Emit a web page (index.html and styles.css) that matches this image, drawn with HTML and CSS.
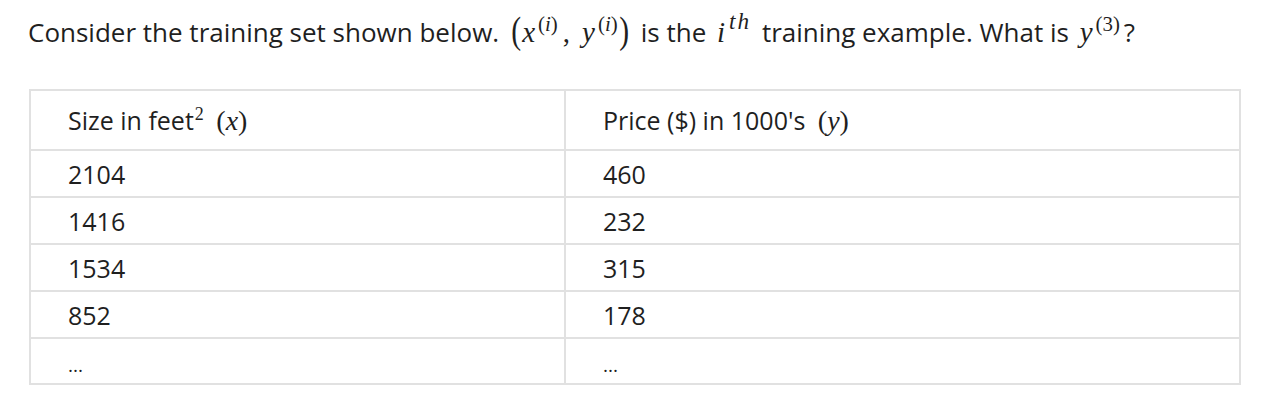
FILE: index.html
```html
<!DOCTYPE html>
<html>
<head>
<meta charset="utf-8">
<link rel="stylesheet" href="styles.css">
</head>
<body>
<p class="question">Consider the training set shown below. <span class="math"><span class="big">(</span><i>x</i><sup>(<i>i</i>)</sup><span class="comma">,</span><i>y</i><sup>(<i>i</i>)</sup><span class="big">)</span></span> is the <span class="math"><i>i</i><sup class="th"><i>th</i></sup></span> training example. What is <span class="math"><i>y</i><sup>(3)</sup></span>?</p>
<table class="data">
  <colgroup><col class="c1"><col class="c2"></colgroup>
  <tr class="head"><td>Size in feet<sup class="num">2</sup> <span class="math">(<i>x</i>)</span></td><td>Price ($) in 1000's <span class="math">(<i>y</i>)</span></td></tr>
  <tr><td>2104</td><td>460</td></tr>
  <tr><td>1416</td><td>232</td></tr>
  <tr><td>1534</td><td>315</td></tr>
  <tr><td>852</td><td>178</td></tr>
  <tr><td class="dots">...</td><td class="dots">...</td></tr>
</table>
</body>
</html>
```
FILE: styles.css
```css
html, body { margin: 0; padding: 0; background: #fff; }
body {
  font-family: "Open Sans", "Noto Sans", sans-serif;
  color: #1f1f1f;
  padding: 0 38px 0 28px;
}
.question {
  margin: 0;
  padding-top: 13px;
  font-size: 26px;
  line-height: 38px;
  white-space: nowrap;
}
.math {
  font-family: "Liberation Serif", "DejaVu Serif", serif;
  font-size: 29px;
  margin: 0 4px;
}
.math i { font-style: italic; }
.math i + sup { margin-left: 3px; }
.big {
  display: inline-block;
  font-size: 37px;
  line-height: 0;
  vertical-align: -1px;
  transform: scaleX(0.8);
}
.comma { margin: 0 12px 0 5px; }
sup { font-size: 0.72em; line-height: 0; vertical-align: 0.55em; }
.math sup.th { font-size: 0.8em; letter-spacing: 2px; margin-left: 4px; }
sup.num { font-family: "Liberation Serif", serif; font-size: 0.72em; margin-left: 1px; }
.data {
  margin-top: 38px;
  margin-left: 1px;
  width: 1212px;
  border-collapse: collapse;
  font-size: 25px;
}
.c1 { width: 535px; }
.data td {
  border: 2px solid #e1e1e1;
  padding: 0 0 0 37px;
  height: 45px;
  line-height: 30px;
}
.data .math { font-size: 28px; margin-left: 6px; }
.data tr.head td { height: 58px; }
.data td.dots { font-size: 19px; padding-top: 8px; height: 36px; }
```
